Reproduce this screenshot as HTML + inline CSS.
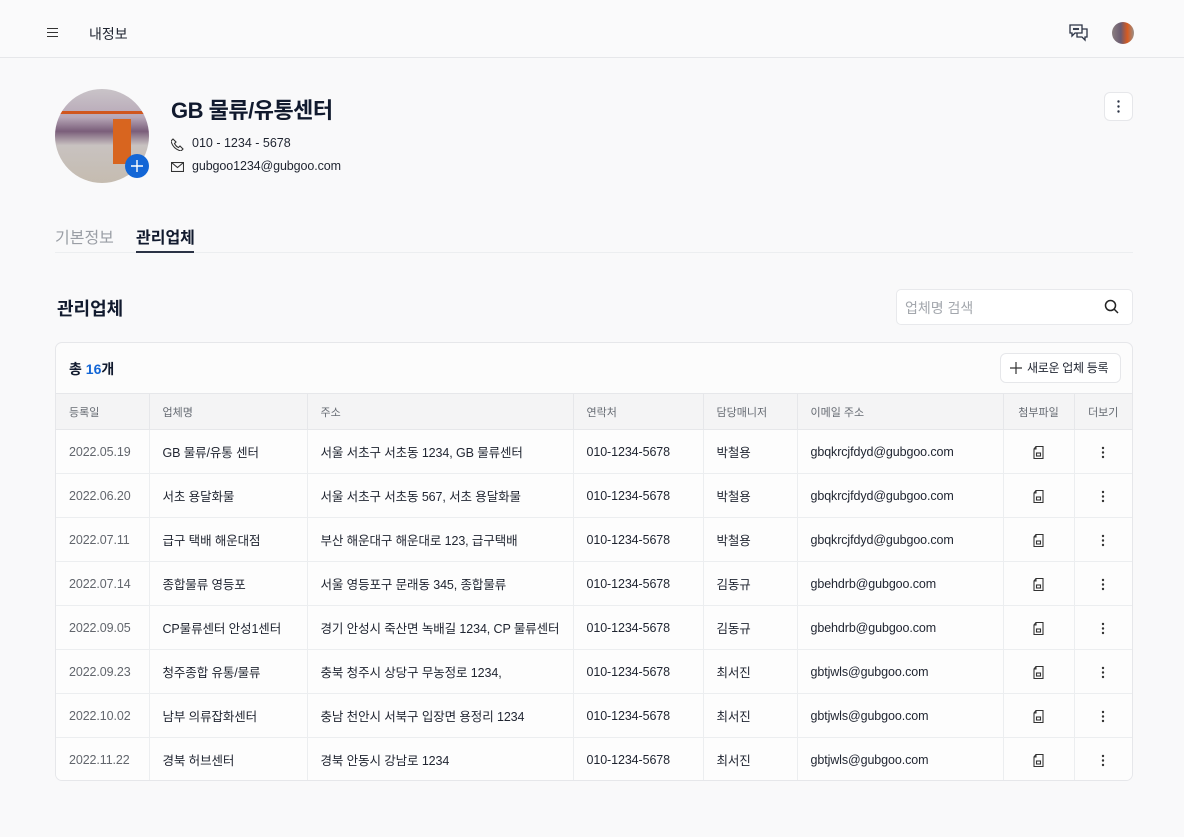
<!DOCTYPE html>
<html><head><meta charset="utf-8"><style>
*{box-sizing:border-box;margin:0;padding:0}
body{width:1184px;height:837px;background:#f9f9fa;font-family:"Liberation Sans","Noto Sans CJK KR",sans-serif;color:#1f2430;position:relative;overflow:hidden}
.a{position:absolute}
.top{left:0;top:0;width:1184px;height:58px;border-bottom:1px solid #e6e7ea;background:#fafafb}
.card{left:55px;top:342px;width:1078px;height:439px;border:1px solid #e6e7ea;border-radius:7px;background:#fcfcfc;overflow:hidden}
table{border-collapse:collapse;position:absolute;left:0;top:50px;width:1076px;table-layout:fixed}
th{height:36px;background:#f4f4f5;font-weight:normal;font-size:11px;color:#666b73;text-align:left;padding-left:13px;border-right:1px solid #e6e7ea;border-top:1px solid #e6e7ea;border-bottom:1px solid #e6e7ea}
td{height:44px;font-size:12.5px;letter-spacing:-0.1px;text-align:left;padding-left:13px;border-right:1px solid #eceef0;border-bottom:1px solid #eceef0;background:#fdfdfd;color:#1f2430;white-space:nowrap;overflow:hidden}
td:first-child{color:#62666d}
th:last-child,td:last-child{border-right:none}
.c{text-align:center;padding-left:0}
</style></head><body>
<div class="a top"></div>
<div class="a" style="left:47px;top:32px;width:11px;height:1.3px;background:#333;box-shadow:0 -4px 0 #333,0 4px 0 #333"></div>
<div class="a" style="left:89px;top:24px;font-size:14px">내정보</div>
<svg class="a" style="left:1069px;top:24px" width="20" height="18" viewBox="0 0 20 18" fill="none" stroke="#2b3345" stroke-width="1.3"><path d="M1 1h12v8H6l-3 3V9H1z"/><path d="M13 5h5v8h-2v3l-3-3H8v-4"/><circle cx="5" cy="5" r=".5" fill="#2b3345"/><circle cx="7" cy="5" r=".5" fill="#2b3345"/><circle cx="9" cy="5" r=".5" fill="#2b3345"/></svg>
<div class="a" style="left:1112px;top:22px;width:22px;height:22px;border-radius:50%;background:linear-gradient(90deg,#8a7f80 0,#6a5a70 40%,#d65a20 70%,#9a8f88)"></div>
<div class="a" style="left:55px;top:89px;width:94px;height:94px;border-radius:50%;overflow:hidden;background:linear-gradient(180deg,#c9c4c8 0,#b8a8b8 30%,#7a5e7a 45%,#c8c2c0 60%,#c5bcb0 100%)">
<div class="a" style="left:0;top:22px;width:94px;height:3px;background:#d0561e"></div>
<div class="a" style="left:58px;top:30px;width:18px;height:45px;background:#d8651f"></div></div>
<div class="a" style="left:125px;top:154px;width:24px;height:24px;border-radius:50%;background:#1366d6"></div>
<svg class="a" style="left:125px;top:154px" width="24" height="24" stroke="#fff" stroke-width="1.4"><path d="M12 6v12M6 12h12"/></svg>
<div class="a" style="left:171px;top:93px;font-size:22px;font-weight:bold;color:#111a2e;letter-spacing:-0.5px">GB 물류/유통센터</div>
<svg class="a" style="left:171px;top:138px" width="13" height="13" viewBox="0 0 13 13" fill="none" stroke="#333" stroke-width="1.1"><path d="M2 1l3 3-1.5 1.5q1.5 3 4 4L9 8l3 3-2 2Q2 11 0 3z"/></svg>
<div class="a" style="left:192px;top:136px;font-size:12.5px;letter-spacing:0px">010 - 1234 - 5678</div>
<svg class="a" style="left:171px;top:162px" width="13" height="10" viewBox="0 0 13 10" fill="none" stroke="#333" stroke-width="1.1"><rect x=".5" y=".5" width="12" height="9"/><path d="M.5 .5l6 5 6-5"/></svg>
<div class="a" style="left:192px;top:159px;font-size:12.5px;letter-spacing:-0.1px">gubgoo1234@gubgoo.com</div>
<div class="a" style="left:1104px;top:92px;width:29px;height:29px;border:1px solid #e6e7ea;border-radius:6px;background:#fff"></div>
<svg class="a" style="left:1104px;top:92px" width="29" height="29" fill="#2b3345"><circle cx="14.5" cy="9.5" r="1.2"/><circle cx="14.5" cy="14.5" r="1.2"/><circle cx="14.5" cy="19.5" r="1.2"/></svg>
<div class="a" style="left:55px;top:224px;font-size:16px;color:#9a9ea5">기본정보</div>
<div class="a" style="left:136px;top:224px;font-size:16px;font-weight:bold;color:#111a2e">관리업체</div>
<div class="a" style="left:55px;top:252px;width:1078px;height:1px;background:#eceef0"></div>
<div class="a" style="left:136px;top:251px;width:58px;height:2px;background:#2b3345"></div>
<div class="a" style="left:57px;top:295px;font-size:18px;font-weight:bold;color:#111a2e">관리업체</div>
<div class="a" style="left:896px;top:289px;width:237px;height:36px;border:1px solid #e8e9ec;border-radius:5px;background:#fff"></div>
<div class="a" style="left:905px;top:298px;font-size:14px;color:#a3a7ad">업체명 검색</div>
<svg class="a" style="left:1104px;top:299px" width="16" height="16" viewBox="0 0 16 16" fill="none" stroke="#222" stroke-width="1.5"><circle cx="6.5" cy="6.5" r="5"/><path d="M10 10l4 4"/></svg>
<div class="a card">
<div class="a" style="left:13px;top:16px;font-size:14px;font-weight:bold;color:#111a2e">총 <span style="color:#1366d6">16</span>개</div>
<div class="a" style="left:944px;top:10px;width:121px;height:30px;border:1px solid #e6e7ea;border-radius:6px;background:#fff;font-size:12px;line-height:28px;padding-left:26px;letter-spacing:-0.3px">새로운 업체 등록</div>
<svg class="a" style="left:954px;top:19px" width="12" height="12" stroke="#333" stroke-width="1.2"><path d="M6 0v12M0 6h12"/></svg>
<table>
<colgroup><col style="width:93px"><col style="width:158px"><col style="width:266px"><col style="width:130px"><col style="width:94px"><col style="width:206px"><col style="width:71px"><col style="width:58px"></colgroup>
<tr><th>등록일</th><th>업체명</th><th>주소</th><th>연락처</th><th>담당매니저</th><th>이메일 주소</th><th class="c">첨부파일</th><th class="c">더보기</th></tr>
<tr><td>2022.05.19</td><td>GB 물류/유통 센터</td><td>서울 서초구 서초동 1234, GB 물류센터</td><td>010-1234-5678</td><td>박철용</td><td>gbqkrcjfdyd@gubgoo.com</td><td class="c">F</td><td class="c">M</td></tr>
<tr><td>2022.06.20</td><td>서초 용달화물</td><td>서울 서초구 서초동 567, 서초 용달화물</td><td>010-1234-5678</td><td>박철용</td><td>gbqkrcjfdyd@gubgoo.com</td><td class="c">F</td><td class="c">M</td></tr>
<tr><td>2022.07.11</td><td>급구 택배 해운대점</td><td>부산 해운대구 해운대로 123, 급구택배</td><td>010-1234-5678</td><td>박철용</td><td>gbqkrcjfdyd@gubgoo.com</td><td class="c">F</td><td class="c">M</td></tr>
<tr><td>2022.07.14</td><td>종합물류 영등포</td><td>서울 영등포구 문래동 345, 종합물류</td><td>010-1234-5678</td><td>김동규</td><td>gbehdrb@gubgoo.com</td><td class="c">F</td><td class="c">M</td></tr>
<tr><td>2022.09.05</td><td>CP물류센터 안성1센터</td><td>경기 안성시 죽산면 녹배길 1234, CP 물류센터</td><td>010-1234-5678</td><td>김동규</td><td>gbehdrb@gubgoo.com</td><td class="c">F</td><td class="c">M</td></tr>
<tr><td>2022.09.23</td><td>청주종합 유통/물류</td><td>충북 청주시 상당구 무농정로 1234,</td><td>010-1234-5678</td><td>최서진</td><td>gbtjwls@gubgoo.com</td><td class="c">F</td><td class="c">M</td></tr>
<tr><td>2022.10.02</td><td>남부 의류잡화센터</td><td>충남 천안시 서북구 입장면 용정리 1234</td><td>010-1234-5678</td><td>최서진</td><td>gbtjwls@gubgoo.com</td><td class="c">F</td><td class="c">M</td></tr>
<tr><td style="border-bottom:none">2022.11.22</td><td style="border-bottom:none">경북 허브센터</td><td style="border-bottom:none">경북 안동시 강남로 1234</td><td style="border-bottom:none">010-1234-5678</td><td style="border-bottom:none">최서진</td><td style="border-bottom:none">gbtjwls@gubgoo.com</td><td class="c" style="border-bottom:none">F</td><td class="c" style="border-bottom:none">M</td></tr>
</table>
</div>
<script>
document.querySelectorAll('td.c').forEach(function(td){
 if(td.textContent==='F') td.innerHTML='<svg width="11" height="13" viewBox="0 0 11 13" fill="none" stroke="#333" stroke-width="1.1" style="vertical-align:middle"><path d="M3 .5h7v12H1V3z"/><path d="M3 .5V3H1"/><rect x="3.5" y="7" width="4" height="3"/></svg>';
 else td.innerHTML='<svg width="4" height="13" fill="#333" style="vertical-align:middle"><circle cx="2" cy="2" r="1.2"/><circle cx="2" cy="6.5" r="1.2"/><circle cx="2" cy="11" r="1.2"/></svg>';
});
</script>
</body></html>
